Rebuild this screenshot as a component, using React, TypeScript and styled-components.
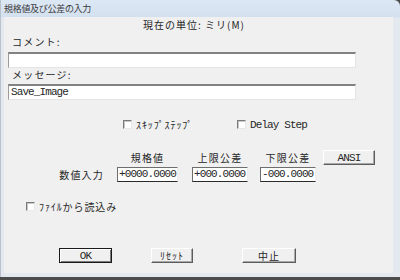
import styled, { createGlobalStyle } from "styled-components";

const GlobalStyle = createGlobalStyle`
  html, body {
    margin: 0;
    padding: 0;
    width: 400px;
    height: 280px;
    overflow: hidden;
    background: #4c4c4c;
  }
  * {
    box-sizing: border-box;
  }
`;

const jp = `"Noto Sans CJK JP", "Noto Sans", sans-serif`;
const mono = `"Liberation Mono", "Noto Sans CJK JP", monospace`;

const Window = styled.div`
  width: 400px;
  height: 277px;
  display: flex;
  flex-direction: column;
  background: linear-gradient(#dde8f5, #d3e0ef 17px, #e4e9ef 18px, #e4e9ef);
  border-top-right-radius: 6px;
  border-left: 1px solid #b9c2cc;
  font-family: ${jp};
  color: #262626;
`;

const TitleBar = styled.div`
  height: 17px;
  display: flex;
  align-items: center;
  padding-left: 3px;
  font-size: 9px;
  letter-spacing: -0.3px;
  color: #3a3a3a;
`;

const Body = styled.div`
  flex: 1;
  margin: 0 7px 4px 3px;
  background: #f0f0f0;
  display: flex;
  flex-direction: column;
`;

const Unit = styled.div`
  margin-top: 1px;
  height: 14px;
  line-height: 14px;
  font-size: 10px;
  letter-spacing: 1px;
  padding-left: 139px;
  white-space: nowrap;
`;

const Label = styled.div<{ $top: number }>`
  margin-top: ${(p) => p.$top}px;
  padding-left: 8px;
  height: 14px;
  line-height: 14px;
  font-size: 10px;
  letter-spacing: 1.2px;
`;

const TextBox = styled.div<{ $top: number }>`
  margin: ${(p) => p.$top}px 0 0 4px;
  width: 348px;
  height: 16px;
  background: #fff;
  border-style: solid;
  border-width: 2px 1px 1px 1px;
  border-color: #828282 #e4e4e4 #e4e4e4 #9a9a9a;
  font-family: ${mono};
  font-size: 11px;
  letter-spacing: -0.9px;
  line-height: 13px;
  padding-left: 2px;
`;

const CheckRow = styled.div`
  margin-top: 17px;
  padding-left: 119px;
  display: grid;
  grid-template-columns: 114px auto;
  height: 14px;
`;

const Check = styled.label<{ $mono?: boolean }>`
  display: flex;
  align-items: center;
  gap: 4px;
  font-size: ${(p) => (p.$mono ? "11px" : "10px")};
  font-family: ${(p) => (p.$mono ? mono : jp)};
  letter-spacing: ${(p) => (p.$mono ? "-0.9px" : "0.9px")};
  white-space: nowrap;
`;

const Box = styled.span`
  width: 9px;
  height: 9px;
  background: #fff;
  border-style: solid;
  border-width: 1px;
  border-color: #7a7a7a #e8e8e8 #e8e8e8 #7a7a7a;
  box-shadow: inset 1px 1px 0 #c8c8c8;
`;

const NumGrid = styled.div`
  margin-top: 19px;
  padding-left: 53px;
  display: grid;
  grid-template-columns: 60px 75px 68px 63px 52px;
  grid-template-rows: 15px 15px;
  row-gap: 2px;
  font-size: 10px;
`;

const Head = styled.div<{ $w: number }>`
  width: ${(p) => p.$w}px;
  text-align: center;
  line-height: 15px;
  letter-spacing: 1.2px;
`;

const RowLabel = styled.div`
  text-align: right;
  padding-right: 13px;
  line-height: 15px;
  letter-spacing: 1.2px;
`;

const NumBox = styled.div<{ $w: number }>`
  width: ${(p) => p.$w}px;
  height: 15px;
  background: #fff;
  border-style: solid;
  border-width: 1px;
  border-color: #6e6e6e #ececec #2a2a2a #6e6e6e;
  font-family: ${mono};
  font-size: 11px;
  letter-spacing: -0.9px;
  line-height: 13px;
  padding-left: 1px;
  white-space: nowrap;
  overflow: hidden;
`;

const Button = styled.button<{ $default?: boolean; $w: number }>`
  width: ${(p) => p.$w}px;
  height: 15px;
  padding: 0;
  background: #f0f0f0;
  border-style: solid;
  border-width: 1px;
  border-color: ${(p) =>
    p.$default ? "#1a1a1a" : "#ffffff #5c5c5c #5c5c5c #ffffff"};
  box-shadow: ${(p) =>
    p.$default
      ? "inset 1px 1px 0 #fff, inset -1px -1px 0 #7a7a7a"
      : "inset -1px -1px 0 #a8a8a8"};
  font-family: ${jp};
  font-size: 10px;
  letter-spacing: 1px;
  line-height: 12px;
  color: #262626;
`;

const MonoText = styled.span`
  font-family: ${mono};
  font-size: 11px;
  letter-spacing: -0.9px;
`;

const FileRow = styled.div`
  margin-top: 17px;
  padding-left: 22px;
  height: 14px;
  display: flex;
`;

const ButtonRow = styled.div`
  margin-top: 35px;
  padding-left: 55px;
  display: grid;
  grid-template-columns: 53px 39px 42px 49px 54px;
`;

export default function App() {
  return (
    <>
      <GlobalStyle />
      <Window>
        <TitleBar>規格値及び公差の入力</TitleBar>
        <Body>
          <Unit>現在の単位: ミリ(M)</Unit>
          <Label $top={3}>コメント:</Label>
          <TextBox $top={3}></TextBox>
          <Label $top={0}>メッセージ:</Label>
          <TextBox $top={2}>Save_Image</TextBox>
          <CheckRow>
            <Check>
              <Box />
              ｽｷｯﾌﾟｽﾃｯﾌﾟ
            </Check>
            <Check $mono>
              <Box />
              Delay Step
            </Check>
          </CheckRow>
          <NumGrid>
            <div />
            <Head $w={61}>規格値</Head>
            <Head $w={56}>上限公差</Head>
            <Head $w={56}>下限公差</Head>
            <Button $w={52}>
              <MonoText>ANSI</MonoText>
            </Button>
            <RowLabel>数値入力</RowLabel>
            <NumBox $w={61}>+0000.0000</NumBox>
            <NumBox $w={56}>+000.0000</NumBox>
            <NumBox $w={56}>-000.0000</NumBox>
            <div />
          </NumGrid>
          <FileRow>
            <Check>
              <Box />
              ﾌｧｲﾙから読込み
            </Check>
          </FileRow>
          <ButtonRow>
            <Button $default $w={53}>
              <MonoText>OK</MonoText>
            </Button>
            <div />
            <Button $w={42}>ﾘｾｯﾄ</Button>
            <div />
            <Button $w={54}>中止</Button>
          </ButtonRow>
        </Body>
      </Window>
    </>
  );
}
